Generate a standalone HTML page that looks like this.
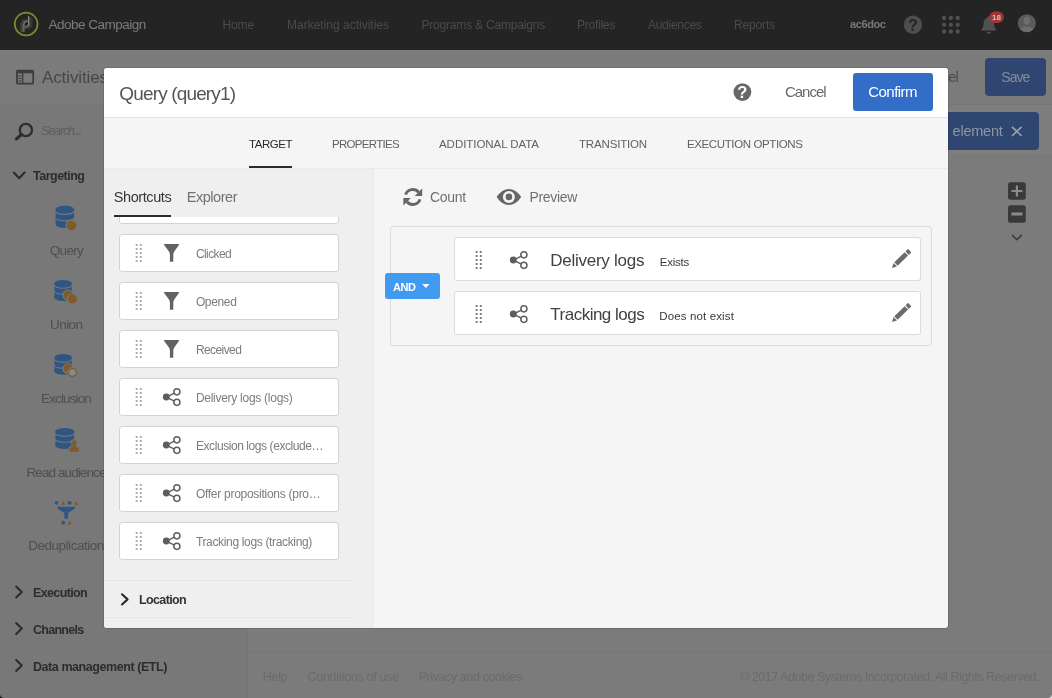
<!DOCTYPE html>
<html lang="en">
<head>
<meta charset="utf-8">
<title>Adobe Campaign - Query (query1)</title>
<style>
html,body{margin:0;padding:0;}
body{width:1052px;height:698px;overflow:hidden;position:relative;background:#7b7b7b;font-family:"Liberation Sans",sans-serif;}
.abs{position:absolute;}
.t{position:absolute;white-space:pre;line-height:1;}
svg{position:absolute;overflow:visible;}
#nav{left:0;top:0;width:1052px;height:50px;background:#242424;}
#hdr{left:0;top:50px;width:1052px;height:55px;background:#7b7b7b;border-bottom:1px solid #757575;box-sizing:border-box;}
#side{left:0;top:105px;width:247px;height:593px;background:#787878;border-right:1px solid #747474;}
#tool{left:248px;top:105px;width:804px;height:51px;background:#7d7d7d;border-bottom:1px solid #777;box-sizing:border-box;}
#foot{left:248px;top:652px;width:804px;height:46px;background:#7b7b7b;border-top:1px solid #767676;box-sizing:border-box;}
.sep{position:absolute;left:0;width:247px;height:1px;background:#757575;}
.btn-d{position:absolute;background:#2f4670;border-radius:4px;}
#modal{left:104px;top:68px;width:844px;height:560px;background:#f5f5f5;border-radius:3px;box-shadow:0 0 0 1px rgba(0,0,0,0.1);overflow:hidden;}
#mhead{left:0;top:0;width:844px;height:49px;background:#fff;border-bottom:1px solid #e4e4e4;}
#mtabs{left:0;top:50px;width:844px;height:50px;background:#f5f5f5;border-bottom:1px solid #ebebeb;}
#mleft{left:0;top:101px;width:269px;height:459px;background:#efefef;border-right:1px solid #eaeaea;}
.card{position:absolute;left:15px;width:218px;height:36px;background:#fff;border:1px solid #d3d3d3;border-radius:3px;}
.row{position:absolute;left:350px;width:465px;height:42px;background:#fff;border:1px solid #dcdcdc;border-radius:3px;}
.hd{position:absolute;width:6px;height:18px;}
.hd i{position:absolute;width:2px;height:2px;background:#ababab;}
.lsep{position:absolute;left:0;width:248px;height:1px;background:#e6e6e6;}
</style>
</head>
<body>
<div id="root" style="position:absolute;left:0;top:0;width:1052px;height:698px;will-change:transform">
<!-- ===== page under overlay ===== -->
<div id="hdr" class="abs"></div>
<div id="side" class="abs"></div>
<div id="tool" class="abs"></div>
<div id="foot" class="abs"></div>
<div class="sep" style="top:156px"></div>
<div class="sep" style="top:574px"></div>
<div class="sep" style="top:610px"></div>
<div class="sep" style="top:647px"></div>
<div class="sep" style="top:684px"></div>
<div class="btn-d" style="left:985px;top:58px;width:61px;height:38px"></div>
<div class="btn-d" style="left:860px;top:112px;width:179px;height:38px"></div>
<span class="t" style="left:42.00px;top:68.91px;font-size:17.0px;letter-spacing:-0.108px;color:#474747;">Activities</span>
<span class="t" style="left:917.50px;top:69.53px;font-size:14.5px;letter-spacing:-0.773px;color:#4a4a4a;">Cancel</span>
<span class="t" style="left:1001.30px;top:70.35px;font-size:14.0px;letter-spacing:-0.980px;color:#868c98;">Save</span>
<span class="t" style="left:952.60px;top:124.23px;font-size:14.5px;letter-spacing:-0.242px;color:#8f96a3;">element</span>
<span class="t" style="left:41.00px;top:125.32px;font-size:12.5px;letter-spacing:-1.115px;color:#5c5c5c;font-style:italic;">Search...</span>
<span class="t" style="left:33.00px;top:170.42px;font-size:12.5px;letter-spacing:-0.503px;color:#2c2c2c;font-weight:700;">Targeting</span>
<span class="t" style="left:49.80px;top:243.77px;font-size:13.5px;letter-spacing:-0.713px;color:#4e4e4e;">Query</span>
<span class="t" style="left:50.00px;top:317.57px;font-size:13.5px;letter-spacing:-0.556px;color:#4e4e4e;">Union</span>
<span class="t" style="left:41.00px;top:392.27px;font-size:13.5px;letter-spacing:-0.865px;color:#4e4e4e;">Exclusion</span>
<span class="t" style="left:26.50px;top:466.47px;font-size:13.5px;letter-spacing:-0.910px;color:#4e4e4e;">Read audience</span>
<span class="t" style="left:28.30px;top:538.77px;font-size:13.5px;letter-spacing:-0.493px;color:#4e4e4e;">Deduplication</span>
<span class="t" style="left:33.00px;top:587.42px;font-size:12.5px;letter-spacing:-0.639px;color:#2c2c2c;font-weight:700;">Execution</span>
<span class="t" style="left:33.00px;top:624.17px;font-size:12.5px;letter-spacing:-0.721px;color:#2c2c2c;font-weight:700;">Channels</span>
<span class="t" style="left:33.00px;top:661.17px;font-size:12.5px;letter-spacing:-0.433px;color:#2c2c2c;font-weight:700;">Data management (ETL)</span>
<span class="t" style="left:262.80px;top:671.02px;font-size:12.5px;letter-spacing:-0.255px;color:#6b6b6b;">Help</span>
<span class="t" style="left:307.70px;top:671.02px;font-size:12.5px;letter-spacing:-0.335px;color:#6b6b6b;">Conditions of use</span>
<span class="t" style="left:418.70px;top:671.02px;font-size:12.5px;letter-spacing:-0.414px;color:#6b6b6b;">Privacy and cookies</span>
<span class="t" style="left:740.00px;top:671.02px;font-size:12.5px;letter-spacing:-0.454px;color:#6b6b6b;">© 2017 Adobe Systems Incorporated. All Rights Reserved.</span>
<svg width="1052" height="698" style="left:0;top:0" viewBox="0 0 1052 698">
<g fill="none" stroke="#3c3c3c" stroke-width="1.7"><rect x="16.9" y="70.7" width="16.3" height="12.9" rx="0.8"/><path d="M16.9,72.2 H33.2" stroke-width="2.2"/><path d="M22.6,72 V83.5" stroke-width="1.5"/><path d="M18.3,76 H21 M18.3,78.5 H21 M18.3,81 H21" stroke-width="1.1"/></g><g fill="none" stroke="#2e2e2e" stroke-linecap="round"><circle cx="25.9" cy="130" r="6.1" stroke-width="2.4"/><path d="M21.2,134.8 L16.5,138.9" stroke-width="3.2"/></g><g fill="none" stroke="#2c2c2c" stroke-width="2.1" stroke-linecap="round" stroke-linejoin="round"><path d="M13.8,172.5 L19.2,178.2 L24.6,172.5"/><path d="M16.2,586.5 L21.8,592 L16.2,597.5"/><path d="M16.2,623.1 L21.8,628.6 L16.2,634.1"/><path d="M16.2,660.1 L21.8,665.6 L16.2,671.1"/></g><path d="M55.50,209.35 A9.30,3.55 0 0 1 74.10,209.35 V224.45 A9.30,3.55 0 0 1 55.50,224.45 Z" fill="#2f5682"/><path d="M55.00,210.85 A9.80,3.55 0 0 0 74.60,210.85" fill="none" stroke="#787878" stroke-width="1.1"/><path d="M55.00,217.30 A9.80,3.55 0 0 0 74.60,217.30" fill="none" stroke="#787878" stroke-width="1.1"/><circle cx="71.6" cy="225.6" r="6" fill="#787878"/><circle cx="71.6" cy="225.6" r="4.8" fill="#7f5b2a"/><path d="M54.40,283.36 A8.70,3.36 0 0 1 71.80,283.36 V297.64 A8.70,3.36 0 0 1 54.40,297.64 Z" fill="#2f5682"/><path d="M53.90,284.86 A9.20,3.36 0 0 0 72.30,284.86" fill="none" stroke="#787878" stroke-width="1.1"/><path d="M53.90,290.90 A9.20,3.36 0 0 0 72.30,290.90" fill="none" stroke="#787878" stroke-width="1.1"/><circle cx="68" cy="295" r="5.6" fill="#787878"/><circle cx="68" cy="295" r="4.5" fill="#7f5b2a"/><circle cx="72.5" cy="299" r="5.6" fill="#787878"/><circle cx="72.5" cy="299" r="4.5" fill="#7f5b2a"/><path d="M54.40,357.33 A8.70,3.33 0 0 1 71.80,357.33 V371.47 A8.70,3.33 0 0 1 54.40,371.47 Z" fill="#2f5682"/><path d="M53.90,358.83 A9.20,3.33 0 0 0 72.30,358.83" fill="none" stroke="#787878" stroke-width="1.1"/><path d="M53.90,364.80 A9.20,3.33 0 0 0 72.30,364.80" fill="none" stroke="#787878" stroke-width="1.1"/><circle cx="68" cy="368.6" r="5.6" fill="#787878"/><circle cx="68" cy="368.6" r="4.5" fill="#7f5b2a"/><circle cx="72.5" cy="372.6" r="5.6" fill="#787878"/><circle cx="72.5" cy="372.6" r="3.9" fill="#8a8a8a" stroke="#7f5b2a" stroke-width="1.3"/><path d="M55.40,431.29 A9.40,3.39 0 0 1 74.20,431.29 V445.71 A9.40,3.39 0 0 1 55.40,445.71 Z" fill="#2f5682"/><path d="M54.90,432.79 A9.90,3.39 0 0 0 74.70,432.79" fill="none" stroke="#787878" stroke-width="1.1"/><path d="M54.90,438.90 A9.90,3.39 0 0 0 74.70,438.90" fill="none" stroke="#787878" stroke-width="1.1"/><path d="M68.6,452.6 V448 Q68.6,446.4 71.5,445.9 V445 Q70.6,443.8 70.6,442.3 Q70.6,439.3 74.1,439.3 Q77.6,439.3 77.6,442.3 Q77.6,443.8 76.7,445 V445.9 Q79.6,446.4 79.6,448 V452.6 Z" fill="#787878"/><path d="M69.6,451.7 V448.4 Q69.6,447.2 72.4,446.7 V444.6 Q71.5,443.7 71.5,442.3 Q71.5,440.2 74.1,440.2 Q76.7,440.2 76.7,442.3 Q76.7,443.7 75.8,444.6 V446.7 Q78.6,447.2 78.6,448.4 V451.7 Z" fill="#7f5b2a"/><circle cx="56.5" cy="502.8" r="1.9" fill="#2f5682"/><circle cx="69.6" cy="502.8" r="1.9" fill="#2f5682"/><path d="M61.1,504.7 L63.2,500.9 L65.3,504.7 Z" fill="#7f5b2a"/><path d="M74.10000000000001,504.7 L76.2,500.9 L78.3,504.7 Z" fill="#7f5b2a"/><path d="M57,506.7 H75.3 Q75.3,509.5 70,511.5 Q68,512.5 68,514.5 V518.8 H64.4 V514.5 Q64.4,512.5 62.3,511.5 Q57,509.5 57,506.7 Z" fill="#2f5682"/><circle cx="63.2" cy="522.7" r="1.9" fill="#2f5682"/><path d="M67.5,524.6 L69.6,520.8 L71.69999999999999,524.6 Z" fill="#7f5b2a"/><rect x="1008" y="182.2" width="17.8" height="17.6" rx="2.5" fill="#393939"/><path d="M1011.4,191 H1022.4 M1016.9,185.5 V196.5" stroke="#8c8c8c" stroke-width="2.2" fill="none"/><rect x="1008" y="205.2" width="17.8" height="17.6" rx="2.5" fill="#393939"/><path d="M1011.4,214 H1022.4" stroke="#8c8c8c" stroke-width="3" fill="none"/><path d="M1012.5,235.4 L1016.9,239.8 L1021.3,235.4" stroke="#3a3a3a" stroke-width="1.5" fill="none" stroke-linecap="round" stroke-linejoin="round"/><path d="M1012,126.8 L1021.6,136 M1021.6,126.8 L1012,136" stroke="#9aa0ab" stroke-width="1.7" fill="none"/>
</svg>

<div id="cbl" class="abs" style="left:0;top:695px;width:3px;height:3px;background:radial-gradient(circle at 3px 0,rgba(0,0,0,0) 2.2px,#111 3.2px)"></div>
<div id="cbr" class="abs" style="left:1049px;top:695px;width:3px;height:3px;background:radial-gradient(circle at 0 0,rgba(255,255,255,0) 2.2px,#eee 3.2px)"></div>
<!-- ===== top nav ===== -->
<div id="nav" class="abs">
<span class="t" style="left:48.40px;top:17.57px;font-size:13.5px;letter-spacing:-0.502px;color:#7c7c7c;">Adobe Campaign</span>
<span class="t" style="left:222.50px;top:18.84px;font-size:12.0px;letter-spacing:-0.129px;color:#4b4b4b;">Home</span>
<span class="t" style="left:287.00px;top:18.84px;font-size:12.0px;letter-spacing:-0.002px;color:#4b4b4b;">Marketing activities</span>
<span class="t" style="left:421.50px;top:18.84px;font-size:12.0px;letter-spacing:-0.195px;color:#4b4b4b;">Programs &amp; Campaigns</span>
<span class="t" style="left:577.00px;top:18.84px;font-size:12.0px;letter-spacing:-0.252px;color:#4b4b4b;">Profiles</span>
<span class="t" style="left:648.00px;top:18.84px;font-size:12.0px;letter-spacing:-0.283px;color:#4b4b4b;">Audiences</span>
<span class="t" style="left:734.00px;top:18.84px;font-size:12.0px;letter-spacing:-0.147px;color:#4b4b4b;">Reports</span>
<span class="t" style="left:850.00px;top:18.69px;font-size:11px;letter-spacing:-0.404px;color:#787878;font-weight:700;">ac6doc</span>
<svg width="1052" height="50" style="left:0;top:0" viewBox="0 0 1052 50">
<circle cx="26.15" cy="24.05" r="11.4" fill="none" stroke="#7d8a2b" stroke-width="1.7"/><g fill="none" stroke-linecap="round"><path d="M23.9,31.6 V24.6 Q23.9,21.6 27.2,21.3" stroke="#8c8c80" stroke-width="1.1"/><path d="M22.7,31.6 V24.2 Q22.7,20.9 27.2,20.5" stroke="#5c5c54" stroke-width="1.1"/><path d="M21.6,31.6 V23.9 Q21.6,20.2 27.2,19.7" stroke="#484841" stroke-width="1.1"/><path d="M20.6,31.6 V23.6 Q20.6,19.6 27.2,19.0" stroke="#383832" stroke-width="1.1"/><path d="M28.6,16.4 V23.4 Q28.6,26.4 25.3,26.7" stroke="#8c8c80" stroke-width="1.1"/><path d="M29.8,17.2 V23.8 Q29.8,27.1 25.3,27.5" stroke="#5c5c54" stroke-width="1.1"/><path d="M30.9,18.0 V24.1 Q30.9,27.8 25.3,28.3" stroke="#484841" stroke-width="1.1"/><path d="M31.9,18.7 V24.4 Q31.9,28.4 25.3,29.0" stroke="#383832" stroke-width="1.1"/></g><circle cx="912.95" cy="24.75" r="9.15" fill="#4e4e4e"/><text x="912.95" y="30.7" text-anchor="middle" font-family="Liberation Sans, sans-serif" font-weight="700" font-size="16" fill="#242424">?</text><circle cx="944.1" cy="18" r="2.15" fill="#515151"/><circle cx="944.1" cy="24.8" r="2.15" fill="#515151"/><circle cx="944.1" cy="31.5" r="2.15" fill="#515151"/><circle cx="950.9" cy="18" r="2.15" fill="#515151"/><circle cx="950.9" cy="24.8" r="2.15" fill="#515151"/><circle cx="950.9" cy="31.5" r="2.15" fill="#515151"/><circle cx="957.7" cy="18" r="2.15" fill="#515151"/><circle cx="957.7" cy="24.8" r="2.15" fill="#515151"/><circle cx="957.7" cy="31.5" r="2.15" fill="#515151"/><path d="M988.8,16.2 Q990,16.2 990.2,17.6 Q994,19 994,24 Q994,28 996,29.6 V30.6 H981.6 V29.6 Q983.6,28 983.6,24 Q983.6,19 987.4,17.6 Q987.6,16.2 988.8,16.2 Z" fill="#515151"/><path d="M986.6,31.8 H991 Q990.6,33.8 988.8,33.8 Q987,33.8 986.6,31.8 Z" fill="#515151"/><rect x="989.1" y="11.5" width="14.6" height="11.4" rx="5.7" fill="#a43434"/><text x="996.4" y="20.1" text-anchor="middle" font-family="Liberation Sans, sans-serif" font-weight="700" font-size="8" fill="#c4c4c4">18</text><clipPath id="av"><circle cx="1026.8" cy="23.2" r="9"/></clipPath><circle cx="1026.8" cy="23.2" r="9" fill="#5a5a5a"/><g clip-path="url(#av)" fill="#6e6e6e"><ellipse cx="1026.8" cy="20.6" rx="3.3" ry="3.9"/><path d="M1019.5,33 Q1019.5,27.2 1024.6,26.4 L1026.8,27 L1029,26.4 Q1034.1,27.2 1034.1,33 Z"/></g>
</svg>
</div>

<!-- ===== modal ===== -->
<div id="modal" class="abs">
<div id="mhead" class="abs"></div>
<div id="mtabs" class="abs"></div>
<div id="mleft" class="abs"></div>
<div class="abs" style="left:749px;top:5px;width:80px;height:38px;background:#326ec8;border-radius:3px"></div><div class="abs" style="left:145px;top:98px;width:43px;height:2px;background:#2b2b2b"></div><div class="abs" style="left:10px;top:147px;width:57px;height:2px;background:#2b2b2b"></div><div class="abs" style="left:0;top:149px;width:270px;height:355px;overflow:hidden"><div class="card" style="top:-31px"></div><div class="card" style="top:17px"></div><div class="card" style="top:65px"></div><div class="card" style="top:113px"></div><div class="card" style="top:161px"></div><div class="card" style="top:209px"></div><div class="card" style="top:257px"></div><div class="card" style="top:305px"></div></div><div class="lsep" style="top:512px"></div><div class="lsep" style="top:549px"></div><div class="abs" style="left:286px;top:158px;width:540px;height:118px;border:1px solid #dcdcdc;border-radius:3px;background:#f5f5f5"></div><div class="row" style="top:169px"></div><div class="row" style="top:223px"></div><div class="abs" style="left:281px;top:205px;width:55px;height:26px;background:#409af0;border-radius:3px"></div>
</div>
<div class="abs" style="left:0;top:0;width:1052px;height:698px;pointer-events:none">
<svg width="1052" height="698" style="left:0;top:0" viewBox="0 0 1052 698">
<circle cx="742.4" cy="92.05" r="8.9" fill="#686868"/><text x="742.4" y="98.2" text-anchor="middle" font-family="Liberation Sans, sans-serif" font-weight="700" font-size="16.5" fill="#fff">?</text><rect x="135.7" y="244.0" width="1.9" height="2" fill="#ababab"/><rect x="135.7" y="248.0" width="1.9" height="2" fill="#ababab"/><rect x="135.7" y="252.0" width="1.9" height="2" fill="#ababab"/><rect x="135.7" y="256.0" width="1.9" height="2" fill="#ababab"/><rect x="135.7" y="260.0" width="1.9" height="2" fill="#ababab"/><rect x="139.8" y="244.0" width="1.9" height="2" fill="#ababab"/><rect x="139.8" y="248.0" width="1.9" height="2" fill="#ababab"/><rect x="139.8" y="252.0" width="1.9" height="2" fill="#ababab"/><rect x="139.8" y="256.0" width="1.9" height="2" fill="#ababab"/><rect x="139.8" y="260.0" width="1.9" height="2" fill="#ababab"/><path d="M163.9,244.1 H179.1 Q178.6,246 174.6,251 Q173.3,252.8 173.3,254.5 V261.8 H169.9 V254.5 Q169.9,252.8 168.6,251 Q164.4,246 163.9,244.1 Z" fill="#626262"/><rect x="135.7" y="292.0" width="1.9" height="2" fill="#ababab"/><rect x="135.7" y="296.0" width="1.9" height="2" fill="#ababab"/><rect x="135.7" y="300.0" width="1.9" height="2" fill="#ababab"/><rect x="135.7" y="304.0" width="1.9" height="2" fill="#ababab"/><rect x="135.7" y="308.0" width="1.9" height="2" fill="#ababab"/><rect x="139.8" y="292.0" width="1.9" height="2" fill="#ababab"/><rect x="139.8" y="296.0" width="1.9" height="2" fill="#ababab"/><rect x="139.8" y="300.0" width="1.9" height="2" fill="#ababab"/><rect x="139.8" y="304.0" width="1.9" height="2" fill="#ababab"/><rect x="139.8" y="308.0" width="1.9" height="2" fill="#ababab"/><path d="M163.9,292.1 H179.1 Q178.6,294 174.6,299 Q173.3,300.8 173.3,302.5 V309.8 H169.9 V302.5 Q169.9,300.8 168.6,299 Q164.4,294 163.9,292.1 Z" fill="#626262"/><rect x="135.7" y="340.0" width="1.9" height="2" fill="#ababab"/><rect x="135.7" y="344.0" width="1.9" height="2" fill="#ababab"/><rect x="135.7" y="348.0" width="1.9" height="2" fill="#ababab"/><rect x="135.7" y="352.0" width="1.9" height="2" fill="#ababab"/><rect x="135.7" y="356.0" width="1.9" height="2" fill="#ababab"/><rect x="139.8" y="340.0" width="1.9" height="2" fill="#ababab"/><rect x="139.8" y="344.0" width="1.9" height="2" fill="#ababab"/><rect x="139.8" y="348.0" width="1.9" height="2" fill="#ababab"/><rect x="139.8" y="352.0" width="1.9" height="2" fill="#ababab"/><rect x="139.8" y="356.0" width="1.9" height="2" fill="#ababab"/><path d="M163.9,340.1 H179.1 Q178.6,342 174.6,347 Q173.3,348.8 173.3,350.5 V357.8 H169.9 V350.5 Q169.9,348.8 168.6,347 Q164.4,342 163.9,340.1 Z" fill="#626262"/><rect x="135.7" y="388.0" width="1.9" height="2" fill="#ababab"/><rect x="135.7" y="392.0" width="1.9" height="2" fill="#ababab"/><rect x="135.7" y="396.0" width="1.9" height="2" fill="#ababab"/><rect x="135.7" y="400.0" width="1.9" height="2" fill="#ababab"/><rect x="135.7" y="404.0" width="1.9" height="2" fill="#ababab"/><rect x="139.8" y="388.0" width="1.9" height="2" fill="#ababab"/><rect x="139.8" y="392.0" width="1.9" height="2" fill="#ababab"/><rect x="139.8" y="396.0" width="1.9" height="2" fill="#ababab"/><rect x="139.8" y="400.0" width="1.9" height="2" fill="#ababab"/><rect x="139.8" y="404.0" width="1.9" height="2" fill="#ababab"/><g stroke="#5e5e5e" fill="none" stroke-width="1.5"><path d="M166.3,397.05 L176.9,391.85 M166.3,397.05 L176.9,402.35"/><circle cx="176.9" cy="391.85" r="3.05" fill="#fff"/><circle cx="176.9" cy="402.35" r="3.05" fill="#fff"/><circle cx="166.3" cy="397.05" r="2.7" fill="#5e5e5e"/></g><rect x="135.7" y="436.0" width="1.9" height="2" fill="#ababab"/><rect x="135.7" y="440.0" width="1.9" height="2" fill="#ababab"/><rect x="135.7" y="444.0" width="1.9" height="2" fill="#ababab"/><rect x="135.7" y="448.0" width="1.9" height="2" fill="#ababab"/><rect x="135.7" y="452.0" width="1.9" height="2" fill="#ababab"/><rect x="139.8" y="436.0" width="1.9" height="2" fill="#ababab"/><rect x="139.8" y="440.0" width="1.9" height="2" fill="#ababab"/><rect x="139.8" y="444.0" width="1.9" height="2" fill="#ababab"/><rect x="139.8" y="448.0" width="1.9" height="2" fill="#ababab"/><rect x="139.8" y="452.0" width="1.9" height="2" fill="#ababab"/><g stroke="#5e5e5e" fill="none" stroke-width="1.5"><path d="M166.3,445.05 L176.9,439.85 M166.3,445.05 L176.9,450.35"/><circle cx="176.9" cy="439.85" r="3.05" fill="#fff"/><circle cx="176.9" cy="450.35" r="3.05" fill="#fff"/><circle cx="166.3" cy="445.05" r="2.7" fill="#5e5e5e"/></g><rect x="135.7" y="484.0" width="1.9" height="2" fill="#ababab"/><rect x="135.7" y="488.0" width="1.9" height="2" fill="#ababab"/><rect x="135.7" y="492.0" width="1.9" height="2" fill="#ababab"/><rect x="135.7" y="496.0" width="1.9" height="2" fill="#ababab"/><rect x="135.7" y="500.0" width="1.9" height="2" fill="#ababab"/><rect x="139.8" y="484.0" width="1.9" height="2" fill="#ababab"/><rect x="139.8" y="488.0" width="1.9" height="2" fill="#ababab"/><rect x="139.8" y="492.0" width="1.9" height="2" fill="#ababab"/><rect x="139.8" y="496.0" width="1.9" height="2" fill="#ababab"/><rect x="139.8" y="500.0" width="1.9" height="2" fill="#ababab"/><g stroke="#5e5e5e" fill="none" stroke-width="1.5"><path d="M166.3,493.05 L176.9,487.85 M166.3,493.05 L176.9,498.35"/><circle cx="176.9" cy="487.85" r="3.05" fill="#fff"/><circle cx="176.9" cy="498.35" r="3.05" fill="#fff"/><circle cx="166.3" cy="493.05" r="2.7" fill="#5e5e5e"/></g><rect x="135.7" y="532.0" width="1.9" height="2" fill="#ababab"/><rect x="135.7" y="536.0" width="1.9" height="2" fill="#ababab"/><rect x="135.7" y="540.0" width="1.9" height="2" fill="#ababab"/><rect x="135.7" y="544.0" width="1.9" height="2" fill="#ababab"/><rect x="135.7" y="548.0" width="1.9" height="2" fill="#ababab"/><rect x="139.8" y="532.0" width="1.9" height="2" fill="#ababab"/><rect x="139.8" y="536.0" width="1.9" height="2" fill="#ababab"/><rect x="139.8" y="540.0" width="1.9" height="2" fill="#ababab"/><rect x="139.8" y="544.0" width="1.9" height="2" fill="#ababab"/><rect x="139.8" y="548.0" width="1.9" height="2" fill="#ababab"/><g stroke="#5e5e5e" fill="none" stroke-width="1.5"><path d="M166.3,541.05 L176.9,535.8499999999999 M166.3,541.05 L176.9,546.3499999999999"/><circle cx="176.9" cy="535.8499999999999" r="3.05" fill="#fff"/><circle cx="176.9" cy="546.3499999999999" r="3.05" fill="#fff"/><circle cx="166.3" cy="541.05" r="2.7" fill="#5e5e5e"/></g><rect x="475.7" y="251.0" width="1.9" height="2" fill="#7a7a7a"/><rect x="475.7" y="255.0" width="1.9" height="2" fill="#7a7a7a"/><rect x="475.7" y="259.0" width="1.9" height="2" fill="#7a7a7a"/><rect x="475.7" y="263.0" width="1.9" height="2" fill="#7a7a7a"/><rect x="475.7" y="267.0" width="1.9" height="2" fill="#7a7a7a"/><rect x="479.8" y="251.0" width="1.9" height="2" fill="#7a7a7a"/><rect x="479.8" y="255.0" width="1.9" height="2" fill="#7a7a7a"/><rect x="479.8" y="259.0" width="1.9" height="2" fill="#7a7a7a"/><rect x="479.8" y="263.0" width="1.9" height="2" fill="#7a7a7a"/><rect x="479.8" y="267.0" width="1.9" height="2" fill="#7a7a7a"/><g stroke="#5e5e5e" fill="none" stroke-width="1.5"><path d="M513.3,260.05 L523.9,254.85000000000002 M513.3,260.05 L523.9,265.35"/><circle cx="523.9" cy="254.85000000000002" r="3.05" fill="#fff"/><circle cx="523.9" cy="265.35" r="3.05" fill="#fff"/><circle cx="513.3" cy="260.05" r="2.7" fill="#5e5e5e"/></g><g transform="translate(892,268) rotate(-44.5)" fill="#6b6b6b"><path d="M0,0 L4.6,-2.4 V2.4 Z"/><rect x="5.6" y="-2.4" width="14.6" height="4.8"/><rect x="21.2" y="-2.4" width="3.6" height="4.8" rx="0.6"/></g><rect x="475.7" y="305.0" width="1.9" height="2" fill="#7a7a7a"/><rect x="475.7" y="309.0" width="1.9" height="2" fill="#7a7a7a"/><rect x="475.7" y="313.0" width="1.9" height="2" fill="#7a7a7a"/><rect x="475.7" y="317.0" width="1.9" height="2" fill="#7a7a7a"/><rect x="475.7" y="321.0" width="1.9" height="2" fill="#7a7a7a"/><rect x="479.8" y="305.0" width="1.9" height="2" fill="#7a7a7a"/><rect x="479.8" y="309.0" width="1.9" height="2" fill="#7a7a7a"/><rect x="479.8" y="313.0" width="1.9" height="2" fill="#7a7a7a"/><rect x="479.8" y="317.0" width="1.9" height="2" fill="#7a7a7a"/><rect x="479.8" y="321.0" width="1.9" height="2" fill="#7a7a7a"/><g stroke="#5e5e5e" fill="none" stroke-width="1.5"><path d="M513.3,314.05 L523.9,308.85 M513.3,314.05 L523.9,319.35"/><circle cx="523.9" cy="308.85" r="3.05" fill="#fff"/><circle cx="523.9" cy="319.35" r="3.05" fill="#fff"/><circle cx="513.3" cy="314.05" r="2.7" fill="#5e5e5e"/></g><g transform="translate(892,322) rotate(-44.5)" fill="#6b6b6b"><path d="M0,0 L4.6,-2.4 V2.4 Z"/><rect x="5.6" y="-2.4" width="14.6" height="4.8"/><rect x="21.2" y="-2.4" width="3.6" height="4.8" rx="0.6"/></g><g fill="none" stroke="#666" stroke-width="2.9"><path d="M405.6,194.6 A7.6,7.6 0 0 1 418.6,192.2"/><path d="M420,199.4 A7.6,7.6 0 0 1 407,201.8"/></g><path d="M422.2,188.6 V196 H414.8 Z" fill="#666"/><path d="M403.4,205.4 V198 H410.8 Z" fill="#666"/><path d="M496.6,197 Q502,189 508.9,189 Q515.8,189 521.2,197 Q515.8,205 508.9,205 Q502,205 496.6,197 Z" fill="#666"/><circle cx="508.9" cy="196.9" r="6" fill="#f5f5f5"/><circle cx="508.9" cy="196.9" r="3.3" fill="#666"/><path d="M422.2,283.9 H429.6 L425.9,288 Z" fill="#fff"/><path d="M122,594.3 L127.6,599.4 L122,604.5" fill="none" stroke="#2b2b2b" stroke-width="2.1" stroke-linecap="round" stroke-linejoin="round"/>
</svg>
<span class="t" style="left:119.30px;top:84.32px;font-size:19.0px;letter-spacing:-0.849px;color:#565656;">Query (query1)</span>
<span class="t" style="left:785.00px;top:84.30px;font-size:15.0px;letter-spacing:-1.034px;color:#686868;">Cancel</span>
<span class="t" style="left:868.25px;top:84.30px;font-size:15.0px;letter-spacing:-0.538px;color:#fff;">Confirm</span>
<span class="t" style="left:249.00px;top:139.27px;font-size:11.5px;letter-spacing:-0.466px;color:#2b2b2b;">TARGET</span>
<span class="t" style="left:332.00px;top:139.27px;font-size:11.5px;letter-spacing:-0.692px;color:#626262;">PROPERTIES</span>
<span class="t" style="left:439.00px;top:139.27px;font-size:11.5px;letter-spacing:-0.050px;color:#626262;">ADDITIONAL DATA</span>
<span class="t" style="left:579.00px;top:139.27px;font-size:11.5px;letter-spacing:-0.164px;color:#626262;">TRANSITION</span>
<span class="t" style="left:687.00px;top:139.27px;font-size:11.5px;letter-spacing:-0.385px;color:#626262;">EXECUTION OPTIONS</span>
<span class="t" style="left:113.75px;top:189.73px;font-size:14.5px;letter-spacing:-0.417px;color:#363636;">Shortcuts</span>
<span class="t" style="left:186.75px;top:189.73px;font-size:14.5px;letter-spacing:-0.469px;color:#727272;">Explorer</span>
<span class="t" style="left:195.90px;top:247.84px;font-size:12.0px;letter-spacing:-0.573px;color:#7c7c7c;">Clicked</span>
<span class="t" style="left:195.90px;top:295.84px;font-size:12.0px;letter-spacing:-0.351px;color:#7c7c7c;">Opened</span>
<span class="t" style="left:195.90px;top:343.84px;font-size:12.0px;letter-spacing:-0.585px;color:#7c7c7c;">Received</span>
<span class="t" style="left:195.90px;top:391.84px;font-size:12.0px;letter-spacing:-0.272px;color:#7c7c7c;">Delivery logs (logs)</span>
<span class="t" style="left:195.90px;top:439.84px;font-size:12.0px;letter-spacing:-0.421px;color:#7c7c7c;">Exclusion logs (exclude…</span>
<span class="t" style="left:195.90px;top:487.84px;font-size:12.0px;letter-spacing:-0.274px;color:#7c7c7c;">Offer propositions (pro…</span>
<span class="t" style="left:195.90px;top:535.84px;font-size:12.0px;letter-spacing:-0.340px;color:#7c7c7c;">Tracking logs (tracking)</span>
<span class="t" style="left:139.00px;top:594.17px;font-size:12.5px;letter-spacing:-0.637px;color:#333;font-weight:700;">Location</span>
<span class="t" style="left:430.00px;top:190.15px;font-size:14.0px;letter-spacing:-0.312px;color:#707070;">Count</span>
<span class="t" style="left:529.40px;top:190.15px;font-size:14.0px;letter-spacing:-0.314px;color:#707070;">Preview</span>
<span class="t" style="left:393.00px;top:281.94px;font-size:11.0px;letter-spacing:-0.448px;color:#fff;font-weight:700;">AND</span>
<span class="t" style="left:550.30px;top:252.41px;font-size:17.0px;letter-spacing:-0.262px;color:#414141;">Delivery logs</span>
<span class="t" style="left:550.30px;top:306.41px;font-size:17.0px;letter-spacing:-0.505px;color:#414141;">Tracking logs</span>
<span class="t" style="left:659.80px;top:257.27px;font-size:11.5px;letter-spacing:-0.245px;color:#3a3a3a;">Exists</span>
<span class="t" style="left:659.30px;top:311.27px;font-size:11.5px;letter-spacing:0.130px;color:#3a3a3a;">Does not exist</span>
</div>
</div>
</body>
</html>
